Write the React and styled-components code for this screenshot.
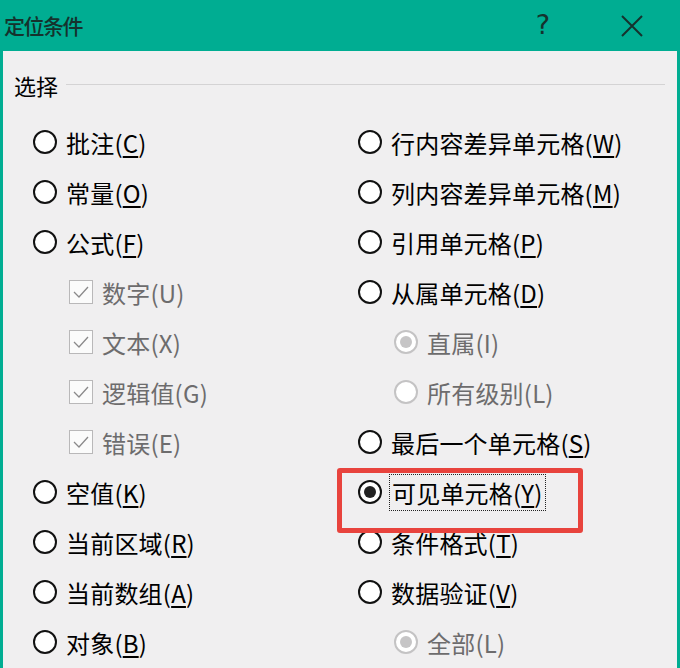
import React from 'react';
import styled, { createGlobalStyle } from 'styled-components';

const GlobalStyle = createGlobalStyle`
  html, body {
    margin: 0;
    padding: 0;
    background: #f0eff0;
  }
  body {
    font-family: "Noto Sans CJK SC", "Noto Sans", sans-serif;
  }
`;

const Dialog = styled.div`
  width: 680px;
  height: 668px;
  overflow: hidden;
  display: flex;
  flex-direction: column;
  background: #f0eff0;
`;

const TitleBar = styled.div`
  height: 51px;
  flex-shrink: 0;
  background: #00ad92;
  display: flex;
  align-items: center;
  color: #15322d;
`;

const Title = styled.div`
  flex: 1;
  padding-left: 4px;
  font-size: 21px;
  font-weight: 500;
  line-height: 51px;
  letter-spacing: -1.5px;
`;

const HelpButton = styled.div`
  width: 40px;
  text-align: center;
  font-family: "DejaVu Sans", sans-serif;
  font-size: 27px;
  margin-right: 54px;
  padding-bottom: 2px;
`;

const CloseButton = styled.div`
  width: 30px;
  height: 30px;
  margin-right: 33px;
  display: flex;
  align-items: center;
  justify-content: center;
`;

const Body = styled.div`
  flex: 1;
  border-left: 3px solid #00ad92;
  border-right: 3px solid #00ad92;
  padding-top: 19px;
`;

const GroupHeader = styled.div`
  display: flex;
  align-items: center;
  height: 30px;
  padding-left: 11px;
  padding-right: 12px;
  margin-bottom: 17px;
`;

const GroupLabel = styled.span`
  font-size: 22px;
  color: #000;
  margin-right: 8px;
`;

const GroupLine = styled.div`
  flex: 1;
  height: 1px;
  background: #d4d3d4;
  margin-top: -2px;
`;

const Columns = styled.div`
  display: grid;
  grid-template-columns: 325px 1fr;
`;

const Column = styled.div`
  display: flex;
  flex-direction: column;
  padding-left: 30px;
`;

const Row = styled.div`
  position: relative;
  height: 50px;
  display: flex;
  align-items: center;
  padding-left: ${(p) => (p.$indent ? '36px' : '0')};
`;

const RadioCircle = styled.span`
  box-sizing: border-box;
  width: 24px;
  height: 24px;
  flex-shrink: 0;
  border-radius: 50%;
  border: 2px solid ${(p) => (p.$disabled ? '#c4c3c4' : '#111')};
  background: #fff;
  display: flex;
  align-items: center;
  justify-content: center;
`;

const RadioDot = styled.span`
  width: 12px;
  height: 12px;
  border-radius: 50%;
  background: ${(p) => (p.$disabled ? '#c6c5c6' : '#222')};
`;

const CheckBox = styled.span`
  box-sizing: border-box;
  width: 24px;
  height: 24px;
  flex-shrink: 0;
  border: 1px solid #b9b8b9;
  background: #fbfbfb;
  display: flex;
  align-items: center;
  justify-content: center;
`;

const Label = styled.span`
  margin-left: ${(p) => (p.$focused ? '7px' : '9px')};
  padding: ${(p) => (p.$focused ? '0 2px' : '0')};
  border: ${(p) => (p.$focused ? '1px dotted #222' : 'none')};
  font-size: 24px;
  line-height: 35px;
  color: ${(p) => (p.$disabled ? '#6d6c6d' : '#000')};
  white-space: nowrap;
  letter-spacing: 0.2px;
`;

const Key = styled.u`
  text-decoration-thickness: 1.5px;
  text-underline-offset: 3px;
`;

const Highlight = styled.div`
  position: absolute;
  left: -21px;
  top: 1px;
  width: 246px;
  height: 65px;
  box-sizing: border-box;
  border: 5px solid #e8433d;
  border-radius: 3px;
  z-index: 2;
  pointer-events: none;
`;

const CloseIcon = () => (
  <svg width="26" height="26" viewBox="0 0 26 26">
    <path d="M3 3 L23 23 M23 3 L3 23" stroke="#15322d" strokeWidth="2" fill="none" />
  </svg>
);

const CheckMark = () => (
  <svg width="18" height="18" viewBox="0 0 18 18">
    <path d="M2 9 L7 14 L16 4" stroke="#8a898a" strokeWidth="1.3" fill="none" />
  </svg>
);

const Text = ({ name, k, disabled }) => (
  <>
    {name}(
    {disabled ? k : <Key>{k}</Key>})
  </>
);

const leftItems = [
  { type: 'radio', name: '批注', k: 'C' },
  { type: 'radio', name: '常量', k: 'O' },
  { type: 'radio', name: '公式', k: 'F' },
  { type: 'check', name: '数字', k: 'U' },
  { type: 'check', name: '文本', k: 'X' },
  { type: 'check', name: '逻辑值', k: 'G' },
  { type: 'check', name: '错误', k: 'E' },
  { type: 'radio', name: '空值', k: 'K' },
  { type: 'radio', name: '当前区域', k: 'R' },
  { type: 'radio', name: '当前数组', k: 'A' },
  { type: 'radio', name: '对象', k: 'B' },
];

const rightItems = [
  { type: 'radio', name: '行内容差异单元格', k: 'W' },
  { type: 'radio', name: '列内容差异单元格', k: 'M' },
  { type: 'radio', name: '引用单元格', k: 'P' },
  { type: 'radio', name: '从属单元格', k: 'D' },
  { type: 'sub', name: '直属', k: 'I', dot: true },
  { type: 'sub', name: '所有级别', k: 'L' },
  { type: 'radio', name: '最后一个单元格', k: 'S' },
  { type: 'radio', name: '可见单元格', k: 'Y', selected: true },
  { type: 'radio', name: '条件格式', k: 'T' },
  { type: 'radio', name: '数据验证', k: 'V' },
  { type: 'sub', name: '全部', k: 'L', dot: true },
];

const Option = ({ item }) => {
  const disabled = item.type === 'check' || item.type === 'sub';
  return (
    <Row $indent={disabled}>
      {item.type === 'check' ? (
        <CheckBox>
          <CheckMark />
        </CheckBox>
      ) : (
        <RadioCircle $disabled={disabled}>
          {(item.dot || item.selected) && <RadioDot $disabled={disabled} />}
        </RadioCircle>
      )}
      <Label $disabled={disabled} $focused={item.selected}>
        <Text name={item.name} k={item.k} disabled={disabled} />
      </Label>
      {item.selected && <Highlight />}
    </Row>
  );
};

export default function App() {
  return (
    <>
      <GlobalStyle />
      <Dialog>
        <TitleBar>
          <Title>定位条件</Title>
          <HelpButton>?</HelpButton>
          <CloseButton>
            <CloseIcon />
          </CloseButton>
        </TitleBar>
        <Body>
          <GroupHeader>
            <GroupLabel>选择</GroupLabel>
            <GroupLine />
          </GroupHeader>
          <Columns>
            <Column>
              {leftItems.map((item, i) => (
                <Option key={i} item={item} />
              ))}
            </Column>
            <Column>
              {rightItems.map((item, i) => (
                <Option key={i} item={item} />
              ))}
            </Column>
          </Columns>
        </Body>
      </Dialog>
    </>
  );
}
